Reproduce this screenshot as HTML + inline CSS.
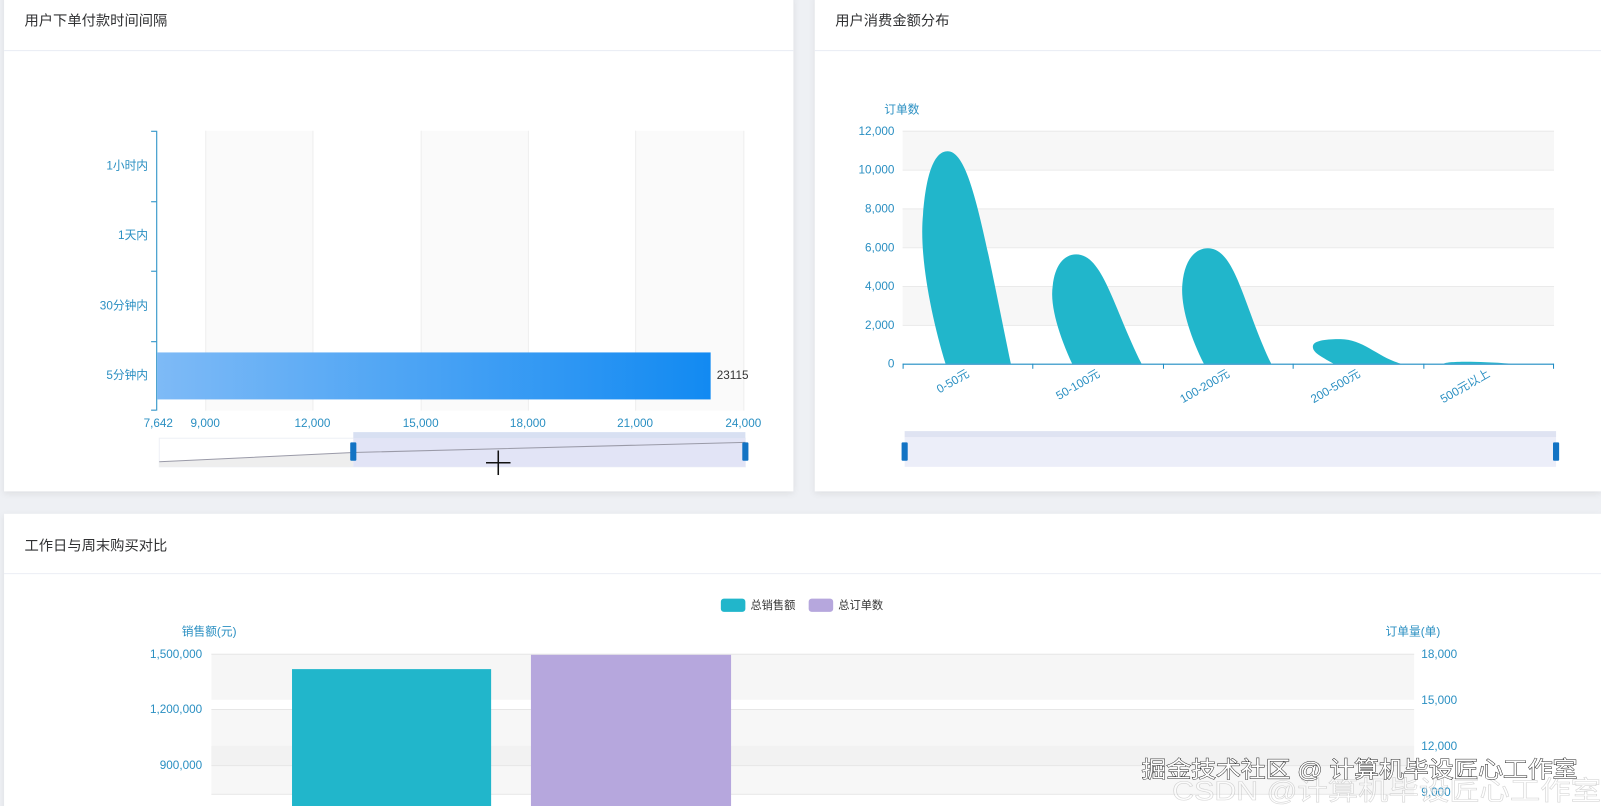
<!DOCTYPE html>
<html><head><meta charset="utf-8"><style>
html,body{margin:0;padding:0;background:#eef0f4;overflow:hidden}
svg{display:block}
text{font-family:"Liberation Sans","Noto Sans CJK SC",sans-serif}
</style></head><body>
<svg width="1601" height="806" viewBox="0 0 1568 789" preserveAspectRatio="none" xmlns="http://www.w3.org/2000/svg">
<defs>
<linearGradient id="g1" x1="0" x2="1" y1="0" y2="0"><stop offset="0" stop-color="#7ebaf6"/><stop offset="1" stop-color="#128af2"/></linearGradient>
<filter id="sh" x="-5%" y="-5%" width="110%" height="115%"><feDropShadow dx="0" dy="2" stdDeviation="3" flood-color="#000" flood-opacity="0.08"/></filter>
</defs>
<rect width="1568" height="789" fill="#eef0f4"/>
<rect x="4" y="-5" width="773" height="486" fill="#fff" filter="url(#sh)"/>
<rect x="798" y="-5" width="770" height="486" fill="#fff" filter="url(#sh)"/>
<rect x="4" y="503" width="1564" height="300" fill="#fff" filter="url(#sh)"/>
<line x1="4" x2="777" y1="49.5" y2="49.5" stroke="#ebeef5"/>
<line x1="798" x2="1568" y1="49.5" y2="49.5" stroke="#ebeef5"/>
<line x1="4" x2="1568" y1="561.5" y2="561.5" stroke="#ebeef5"/>
<g font-size="14" fill="#303133">
<text x="24" y="25">用户下单付款时间间隔</text>
<text x="818" y="25">用户消费金额分布</text>
<text x="24" y="539">工作日与周末购买对比</text>
</g>

<rect x="201" y="128" width="105" height="274" fill="#fafafa"/>
<rect x="412" y="128" width="105" height="274" fill="#fafafa"/>
<rect x="622" y="128" width="106" height="274" fill="#fafafa"/>
<g stroke="#eeeeee">
<line x1="201.5" x2="201.5" y1="128" y2="402"/><line x1="306.5" x2="306.5" y1="128" y2="402"/>
<line x1="412.5" x2="412.5" y1="128" y2="402"/><line x1="517.5" x2="517.5" y1="128" y2="402"/>
<line x1="622.5" x2="622.5" y1="128" y2="402"/><line x1="728.5" x2="728.5" y1="128" y2="402"/>
</g>
<g stroke="#1e8bc3"><line x1="153.5" x2="153.5" y1="128" y2="402"/>
<line x1="148" x2="153" y1="128.5" y2="128.5"/><line x1="148" x2="153" y1="197.5" y2="197.5"/>
<line x1="148" x2="153" y1="265.5" y2="265.5"/><line x1="148" x2="153" y1="334.5" y2="334.5"/><line x1="148" x2="153" y1="401.5" y2="401.5"/></g>
<g font-size="11.5" fill="#2a8fc2" text-anchor="end">
<text x="145" y="166">1小时内</text><text x="145" y="234">1天内</text><text x="145" y="303">30分钟内</text><text x="145" y="371">5分钟内</text>
</g>
<rect x="154" y="345" width="542" height="46" fill="url(#g1)"/>
<text x="702" y="371" font-size="11.5" fill="#333">23115</text>
<g font-size="11.5" fill="#2a8fc2" text-anchor="middle">
<text x="155" y="418">7,642</text><text x="201" y="418">9,000</text><text x="306" y="418">12,000</text><text x="412" y="418">15,000</text><text x="517" y="418">18,000</text><text x="622" y="418">21,000</text><text x="728" y="418">24,000</text>
</g>
<rect x="156" y="429" width="574" height="28" fill="#fff" stroke="#eef0f6"/>
<path d="M156,452 L346,443 L346,457 L156,457Z" fill="#eeeeee"/>
<rect x="346" y="429" width="384" height="28" fill="#e2e4f6"/>
<rect x="346" y="423" width="384" height="6" fill="#d8e0f2"/>
<polyline points="156,452 346,443 730,433" fill="none" stroke="#9a9aa8" stroke-width="1"/>
<rect x="343" y="433" width="6" height="18" rx="1" fill="#1273c4"/>
<rect x="727" y="433" width="6" height="18" rx="1" fill="#1273c4"/>
<g stroke="#111" stroke-width="1.5"><line x1="476" x2="500" y1="453" y2="453"/><line x1="488" x2="488" y1="441" y2="465"/></g>

<rect x="884" y="128" width="638" height="38" fill="#f7f7f7"/>
<rect x="884" y="204" width="638" height="38" fill="#f7f7f7"/>
<rect x="884" y="280" width="638" height="38" fill="#f7f7f7"/>
<g stroke="#eaeaea">
<line x1="884" x2="1522" y1="128.5" y2="128.5"/><line x1="884" x2="1522" y1="166.5" y2="166.5"/><line x1="884" x2="1522" y1="204.5" y2="204.5"/>
<line x1="884" x2="1522" y1="242.5" y2="242.5"/><line x1="884" x2="1522" y1="280.5" y2="280.5"/><line x1="884" x2="1522" y1="318.5" y2="318.5"/>
</g>
<text x="866" y="111" font-size="11.5" fill="#2a8fc2">订单数</text>
<g font-size="11.5" fill="#2a8fc2" text-anchor="end">
<text x="876" y="132">12,000</text><text x="876" y="170">10,000</text><text x="876" y="208">8,000</text><text x="876" y="246">6,000</text><text x="876" y="284">4,000</text><text x="876" y="322">2,000</text><text x="876" y="360">0</text>
</g>
<g fill="#21b6cb">
<path d="M926,356 C912,310 900,250 904,210 C907,170 915,148 928,148 C950,148 962,220 990,356Z"/>
<path d="M1050,356 C1038,330 1028,300 1031,280 C1033,260 1042,249 1054,249 C1080,249 1090,300 1118,356Z"/>
<path d="M1179,356 C1166,330 1156,300 1158,278 C1160,255 1170,243 1183,243 C1210,243 1218,300 1245,356Z"/>
<path d="M1306,356 C1296,350 1284,345 1286,338 C1288,333 1300,332 1313,332 C1335,332 1350,350 1372,356Z"/>
<path d="M1414,356 C1416,354 1440,353 1480,356Z"/>
</g>
<g stroke="#1e8bc3"><line x1="884" x2="1522" y1="356.5" y2="356.5"/>
<line x1="884.5" x2="884.5" y1="356" y2="361"/><line x1="1011.5" x2="1011.5" y1="356" y2="361"/><line x1="1139.5" x2="1139.5" y1="356" y2="361"/><line x1="1266.5" x2="1266.5" y1="356" y2="361"/><line x1="1394.5" x2="1394.5" y1="356" y2="361"/><line x1="1521.5" x2="1521.5" y1="356" y2="361"/></g>
<g font-size="11.5" fill="#2a8fc2" text-anchor="end">
<text transform="translate(950,368) rotate(-30)">0-50元</text>
<text transform="translate(1078,368) rotate(-30)">50-100元</text>
<text transform="translate(1205,368) rotate(-30)">100-200元</text>
<text transform="translate(1333,368) rotate(-30)">200-500元</text>
<text transform="translate(1460,368) rotate(-30)">500元以上</text>
</g>
<rect x="886" y="428" width="638" height="29" fill="#eceef9"/>
<rect x="886" y="422" width="638" height="6" fill="#dfe3f2"/>
<rect x="883" y="433" width="6" height="18" rx="1" fill="#1273c4"/>
<rect x="1521" y="433" width="6" height="18" rx="1" fill="#1273c4"/>

<rect x="706" y="586" width="24" height="13" rx="3" fill="#21b6cb"/>
<text x="735" y="596" font-size="11" fill="#333">总销售额</text>
<rect x="792" y="586" width="24" height="13" rx="3" fill="#b6a7dd"/>
<text x="821" y="596" font-size="11" fill="#333">总订单数</text>
<text x="178" y="622" font-size="11.5" fill="#2a8fc2">销售额(元)</text>
<text x="1357" y="622" font-size="11.5" fill="#2a8fc2">订单量(单)</text>
<rect x="207" y="640" width="1178" height="45" fill="#f6f6f6"/>
<rect x="207" y="695" width="1178" height="35" fill="#f7f7f7"/>
<rect x="207" y="730" width="1178" height="19" fill="#f2f2f2"/>
<rect x="207" y="749" width="1178" height="28" fill="#f7f7f7"/>
<g stroke="#e6e6e6">
<line x1="207" x2="1385" y1="640.5" y2="640.5"/><line x1="207" x2="1385" y1="694.5" y2="694.5"/><line x1="207" x2="1385" y1="749.5" y2="749.5"/>
<line x1="207" x2="1385" y1="777.5" y2="777.5"/>
</g>
<g font-size="11.5" fill="#2a8fc2" text-anchor="end">
<text x="198" y="644">1,500,000</text><text x="198" y="698">1,200,000</text><text x="198" y="753">900,000</text>
</g>
<g font-size="11.5" fill="#2a8fc2">
<text x="1392" y="644">18,000</text><text x="1392" y="689">15,000</text><text x="1392" y="734">12,000</text><text x="1392" y="779">9,000</text>
</g>
<rect x="286" y="655" width="195" height="140" fill="#21b6cb"/>
<rect x="520" y="641" width="196" height="154" fill="#b6a7dd"/>
<text x="1148" y="783" font-size="26" textLength="420" lengthAdjust="spacingAndGlyphs" fill="#fff" fill-opacity="0.5" stroke="#999" stroke-opacity="0.4" stroke-width="0.6">CSDN @计算机毕设匠心工作室</text>
<text x="1118" y="761" font-size="22" textLength="427" lengthAdjust="spacingAndGlyphs" fill="#fff" stroke="#222" stroke-width="0.9" style="paint-order:stroke">掘金技术社区 @ 计算机毕设匠心工作室</text>
</svg>
</body></html>
